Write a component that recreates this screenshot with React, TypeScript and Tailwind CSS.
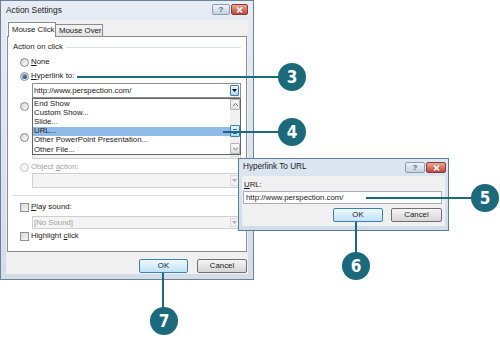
import React from 'react';

function Radio({ checked, disabled }: { checked?: boolean; disabled?: boolean }) {
  return (
    <span
      className={`w-[9px] h-[9px] shrink-0 rounded-full border flex items-center justify-center ${
        disabled ? 'border-[#c6c6c6] bg-[#f4f4f4]' : 'border-[#8a8a8a] bg-linear-to-br from-[#d6d6d6] to-[#fbfbfb]'
      }`}
    >
      {checked && <span className="w-[5px] h-[5px] rounded-full bg-linear-to-br from-[#7fb2e2] to-[#163f78]" />}
    </span>
  );
}

function Check() {
  return <span className="w-[9px] h-[9px] shrink-0 border border-[#8e8f8f] bg-linear-to-br from-[#d9d9d9] to-[#f7f7f7]" />;
}

function Tri({ color }: { color: string }) {
  return (
    <svg width="5" height="3" viewBox="0 0 5 3">
      <path d="M0 0h5L2.5 3z" fill={color} />
    </svg>
  );
}

function Combo({ value, disabled, className }: { value?: string; disabled?: boolean; className: string }) {
  return (
    <div
      className={`ml-[24px] w-[209px] shrink-0 border flex items-stretch ${
        disabled ? 'border-[#cfcfcf] bg-[#f4f4f4] text-[#a3a3a3]' : 'border-[#8e8f8f] bg-white'
      } ${className}`}
    >
      <span className="flex-1 pl-px flex items-center">{value}</span>
      {disabled ? (
        <span className="w-[9px] my-px mr-px border border-[#dadada] bg-[#f2f2f2] flex items-center justify-center">
          <Tri color="#b0b0b0" />
        </span>
      ) : (
        <span className="w-[9px] my-px mr-px rounded-[1px] border border-[#3c7fb1] bg-linear-to-b from-[#eaf6fd] to-[#a9daf5] flex items-center justify-center">
          <Tri color="#000" />
        </span>
      )}
    </div>
  );
}

function Btn({ children, primary, className }: { children: React.ReactNode; primary?: boolean; className: string }) {
  return (
    <div
      className={`h-[14px] rounded-[2px] border flex items-center justify-center ${
        primary
          ? 'border-[#3c7fb1] bg-linear-to-b from-[#eef8fe] to-[#bfe3f7]'
          : 'border-[#707070] bg-linear-to-b from-[#f5f5f5] to-[#d6d6d6]'
      } ${className}`}
    >
      {children}
    </div>
  );
}

function TitleButtons({ help, close }: { help: string; close: string }) {
  return (
    <div className="flex gap-px">
      <div className={`h-[11px] rounded-[2px] border border-[#8c9db3] bg-linear-to-b from-[#eef2f7] to-[#c5d2e1] flex items-center justify-center text-[8px] font-bold text-[#51627a] ${help}`}>
        ?
      </div>
      <div className={`h-[11px] rounded-[2px] border border-[#8a3c33] bg-linear-to-b from-[#e9a596] to-[#c2443a] flex items-center justify-center ${close}`}>
        <svg width="7" height="6" viewBox="0 0 7 6">
          <path d="M1 0.5l5 5M6 0.5l-5 5" stroke="#fff" strokeWidth="1.6" />
        </svg>
      </div>
    </div>
  );
}

function ActionSettings() {
  const items = ['End Show', 'Custom Show...', 'Slide...', 'URL...', 'Other PowerPoint Presentation...', 'Other File...'];

  return (
    <div className="absolute left-0 top-0 w-[254px] h-[280px] border border-[#6e819a] bg-linear-to-b from-[#e6ecf3] to-[#d3dde8] flex flex-col">
      <div className="h-[19px] flex items-start justify-between pl-[5px] pr-[5px] pt-[3px]">
        <span className="text-[8.4px] mt-[2px]">Action Settings</span>
        <TitleButtons help="w-[18px]" close="w-[17px]" />
      </div>

      <div className="mx-[5px] h-[254px] bg-[#f0f0f0] px-px pt-[2px] flex flex-col">
        <div className="relative z-10 -mb-px flex items-end h-[15px] pl-px">
          <div className="h-[15px] w-[48px] bg-white border border-b-0 border-[#898c95] pl-[3px] flex items-center">Mouse Click</div>
          <div className="h-[12px] w-[47px] mb-px border border-l-0 border-b-0 border-[#898c95] bg-linear-to-b from-[#f3f3f3] to-[#e2e2e2] pl-[3px] flex items-center">
            Mouse Over
          </div>
        </div>

        <div className="relative h-[216px] border border-[#898c95] bg-white flex flex-col pt-[4px]">
          <div className="h-[12px] px-[5px] flex items-center gap-[3px]">
            <span>Action on click</span>
            <div className="flex-1 h-px bg-[#d5dfe5]" />
          </div>

          <div className="mt-[3px] h-[12px] pl-[12px] flex items-center gap-[2px]">
            <Radio />
            <span>
              <u>N</u>one
            </span>
          </div>
          <div className="mt-[2px] h-[12px] pl-[12px] flex items-center gap-[2px]">
            <Radio checked />
            <span>
              <u>H</u>yperlink to:
            </span>
          </div>
          <Combo className="mt-px h-[15px]" value="http://www.perspection.com/" />

          {/* run program / run macro rows sit under the open list */}
          <div className="mt-[2px] h-[12px] pl-[12px] flex items-center">
            <Radio />
          </div>
          <div className="mt-[2px] ml-[24px] w-[160px] h-[14px] border border-[#cfcfcf] bg-[#f4f4f4]" />
          <div className="mt-[3px] h-[12px] pl-[12px] flex items-center">
            <Radio />
          </div>
          <Combo className="mt-[2px] h-[14px]" disabled />

          <div className="mt-[2px] h-[12px] pl-[12px] flex items-center gap-[2px]">
            <Radio disabled />
            <span className="text-[#a3a3a3]">
              Object <u>a</u>ction:
            </span>
          </div>
          <Combo className="h-[15px]" disabled />

          <div className="mt-[7px] mx-[5px] h-px bg-[#d5dfe5]" />

          <div className="mt-[5px] h-[12px] pl-[12px] flex items-center gap-[2px]">
            <Check />
            <span>
              <u>P</u>lay sound:
            </span>
          </div>
          <Combo className="mt-[3px] h-[13px]" value="[No Sound]" disabled />
          <div className="mt-px h-[12px] pl-[12px] flex items-center gap-[2px]">
            <Check />
            <span>
              Highlight <u>c</u>lick
            </span>
          </div>

          {/* open drop-down list */}
          <div className="absolute left-[24px] top-[61px] w-[209px] h-[57px] border border-[#646464] bg-white flex">
            <div className="flex-1 flex flex-col pt-[0.5px]">
              {items.map((it) => (
                <div key={it} className={`h-[9.2px] pl-px flex items-center ${it === 'URL...' ? 'bg-[#8fbbe8]' : ''}`}>
                  {it}
                </div>
              ))}
            </div>
            <div className="w-[10px] bg-[#f0f0f0] flex flex-col">
              <div className="h-[11px] border border-[#b5b5b5] rounded-[1px] bg-linear-to-b from-[#f7f7f7] to-[#dedede] flex items-center justify-center">
                <svg width="5" height="3" viewBox="0 0 5 3">
                  <path d="M0 3L2.5 0.5 5 3" fill="none" stroke="#777" strokeWidth="1" />
                </svg>
              </div>
              <div className="mt-[15px] h-[12px] border border-[#3c7fb1] rounded-[1px] bg-linear-to-b from-[#e6f4fc] to-[#a9d8f4] flex flex-col items-center justify-center gap-px">
                <span className="w-[4px] h-px bg-[#3c6a90]" />
                <span className="w-[4px] h-px bg-[#3c6a90]" />
                <span className="w-[4px] h-px bg-[#3c6a90]" />
              </div>
              <div className="mt-auto h-[11px] border border-[#b5b5b5] rounded-[1px] bg-linear-to-b from-[#f7f7f7] to-[#dedede] flex items-center justify-center">
                <svg width="5" height="3" viewBox="0 0 5 3">
                  <path d="M0 0.5L2.5 3 5 0.5" fill="none" stroke="#777" strokeWidth="1" />
                </svg>
              </div>
            </div>
          </div>
        </div>

        <div className="mt-[7px] flex justify-end gap-[9px]">
          <Btn primary className="w-[49px]">
            OK
          </Btn>
          <Btn className="w-[50px]">Cancel</Btn>
        </div>
      </div>
    </div>
  );
}

function HyperlinkDialog() {
  return (
    <div className="absolute left-[238px] top-[158px] w-[211px] h-[73px] border border-[#5f7b9b] bg-linear-to-b from-[#dde7f2] to-[#cfdcea] flex flex-col">
      <div className="h-[17px] flex items-start justify-between pl-[4px] pr-[2px] pt-[3px]">
        <span className="text-[8.2px] mt-px">Hyperlink To URL</span>
        <TitleButtons help="w-[20px] h-[10px]" close="w-[20px] h-[10px]" />
      </div>
      <div className="mx-[3px] h-[50px] bg-[#f0f0f0] px-px pt-[3px] flex flex-col">
        <div className="h-[11px] pl-px flex items-center">
          <span>
            <u>U</u>RL:
          </span>
        </div>
        <div className="mt-px h-[13px] w-[199px] border border-[#abadb3] bg-white pl-[2px] flex items-center">http://www.perspection.com/</div>
        <div className="mt-[4px] pr-[2px] flex justify-end gap-[8px]">
          <Btn primary className="w-[50px]">
            OK
          </Btn>
          <Btn className="w-[51px]">Cancel</Btn>
        </div>
      </div>
    </div>
  );
}

function Badge({ n, className }: { n: string; className: string }) {
  return (
    <div
      className={`absolute w-[28px] h-[28px] rounded-full bg-[#1b6a7b] text-white flex items-center justify-center font-['Liberation_Sans_Narrow','DejaVu_Sans_Condensed',sans-serif] font-bold text-[17px] ${className}`}
    >
      {n}
    </div>
  );
}

export default function App() {
  return (
    <div className="relative w-[500px] h-[338px] overflow-hidden bg-white font-['Liberation_Sans',Arial,sans-serif] text-[7.8px] leading-none text-[#1a1a1a]">
      <ActionSettings />
      <HyperlinkDialog />

      {/* callouts */}
      <div className="absolute left-[77px] top-[76px] w-[202px] h-[2px] bg-[#1b6a7b]" />
      <Badge n="3" className="left-[278px] top-[63px]" />

      <div className="absolute left-[223px] top-[131px] w-[56px] h-[2px] bg-[#1b6a7b]" />
      <Badge n="4" className="left-[278px] top-[118px]" />

      <div className="absolute left-[366px] top-[197px] w-[106px] h-[2px] bg-[#1b6a7b]" />
      <Badge n="5" className="left-[471px] top-[184px]" />

      <div className="absolute left-[355px] top-[222px] w-[2px] h-[32px] bg-[#1b6a7b]" />
      <Badge n="6" className="left-[342px] top-[252px]" />

      <div className="absolute left-[162px] top-[273px] w-[2px] h-[35px] bg-[#1b6a7b]" />
      <Badge n="7" className="left-[150px] top-[307px]" />
    </div>
  );
}
